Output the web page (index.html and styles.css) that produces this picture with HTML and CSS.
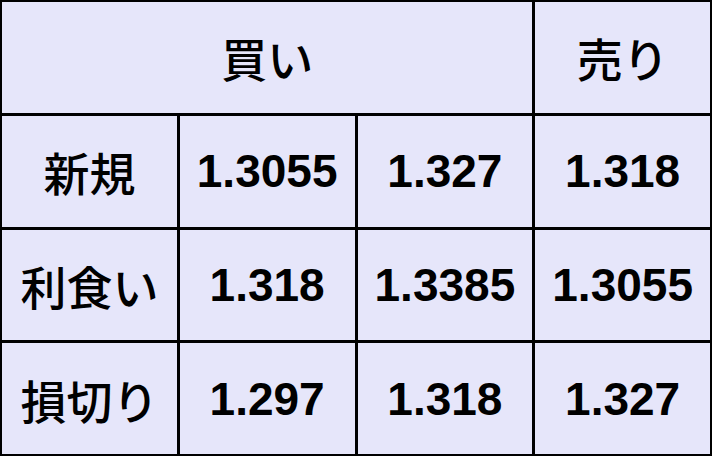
FILE: index.html
```html
<!DOCTYPE html>
<html lang="ja">
<head>
<meta charset="utf-8">
<link rel="stylesheet" href="styles.css">
</head>
<body>
<div class="grid">
  <div class="cell head span3">買い</div>
  <div class="cell head">売り</div>
  <div class="cell label">新規</div>
  <div class="cell num">1.3055</div>
  <div class="cell num">1.327</div>
  <div class="cell num">1.318</div>
  <div class="cell label">利食い</div>
  <div class="cell num">1.318</div>
  <div class="cell num">1.3385</div>
  <div class="cell num">1.3055</div>
  <div class="cell label">損切り</div>
  <div class="cell num">1.297</div>
  <div class="cell num">1.318</div>
  <div class="cell num">1.327</div>
</div>
</body>
</html>
```
FILE: styles.css
```css
html, body {
  margin: 0;
  padding: 0;
  background: #ffffff;
}
.grid {
  box-sizing: border-box;
  width: 712px;
  height: 456px;
  padding: 2px;
  background: #000000;
  display: grid;
  grid-template-columns: 1fr 1fr 1fr 1fr;
  grid-template-rows: 1fr 1fr 1fr 1fr;
  gap: 3px;
}
.cell {
  background: #e6e6fa;
  display: flex;
  align-items: center;
  justify-content: center;
  color: #000000;
  font-family: "Liberation Sans", "Noto Sans CJK JP", sans-serif;
  font-weight: 700;
}
.span3 {
  grid-column: span 3;
}
.head, .label {
  font-family: "Noto Sans CJK JP", sans-serif;
  font-weight: 500;
  font-size: 46px;
}
.num {
  font-size: 46px;
}
```
